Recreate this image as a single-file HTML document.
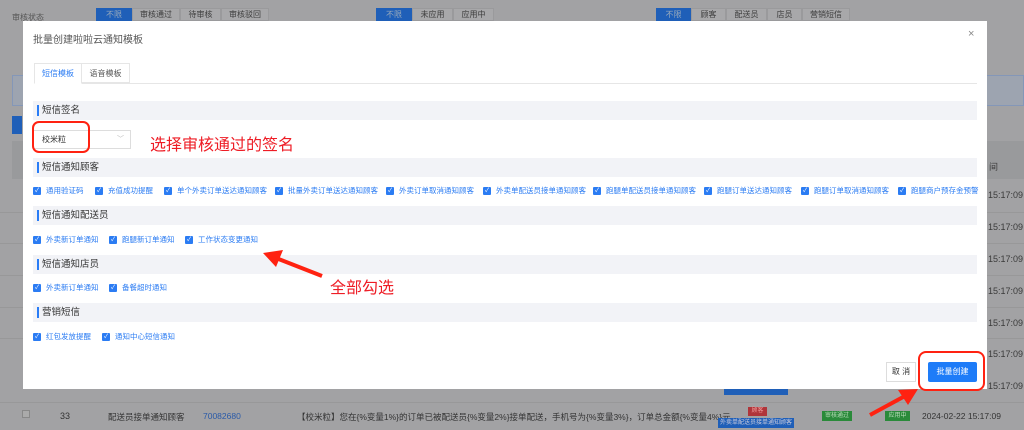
<!DOCTYPE html>
<html><head><meta charset="utf-8"><style>
*{margin:0;padding:0;box-sizing:border-box}
body{width:1024px;height:430px;overflow:hidden;background:#a2a2a4;font-family:"Liberation Sans","Noto Sans CJK SC",sans-serif;position:relative;font-size:9px;color:#333}
.a{position:absolute}
.bgb{position:absolute;height:13px;top:8px;border:1px solid #9a9a9c;background:#a8a8aa;color:#3c3c3c;font-size:8px;text-align:center;line-height:11px}
.bgb.on{background:#1f5fb8;color:#9ab;border-color:#1f5fb8}
.time{position:absolute;left:988px;font-size:9px;color:#3a3a3a}
.hl{position:absolute;left:0;width:1024px;height:1px;background:#989899}
.modal{position:absolute;left:23px;top:21px;width:964px;height:368px;background:#fff}
.sec{position:absolute;left:10px;width:944px;height:19px;background:#f2f3f7;font-size:9.5px;color:#333;line-height:19px;padding-left:9px}
.sec:before{content:"";position:absolute;left:4px;top:4px;width:2px;height:11px;background:#2a7df6}
.cb{position:absolute;font-size:7.5px;color:#2b7cf3;white-space:nowrap;line-height:10px;display:flex;align-items:center}
.cb:before{content:"✓";display:block;width:8px;height:8px;background:#2b7cf3;color:#fff;font-size:6px;line-height:8px;text-align:center;border-radius:1px;margin-right:5px}
</style></head><body>
<div class="a" style="left:12px;top:12px;font-size:8px;color:#555">审核状态</div>
<div class="bgb on" style="left:96px;width:36px">不限</div>
<div class="bgb" style="left:132px;width:48px">审核通过</div>
<div class="bgb" style="left:180px;width:41px">待审核</div>
<div class="bgb" style="left:221px;width:48px">审核驳回</div>
<div class="bgb on" style="left:376px;width:36px">不限</div>
<div class="bgb" style="left:412px;width:41px">未应用</div>
<div class="bgb" style="left:453px;width:41px">应用中</div>
<div class="bgb on" style="left:656px;width:35px">不限</div>
<div class="bgb" style="left:691px;width:35px">顾客</div>
<div class="bgb" style="left:726px;width:41px">配送员</div>
<div class="bgb" style="left:767px;width:35px">店员</div>
<div class="bgb" style="left:802px;width:48px">营销短信</div>
<div class="a" style="left:12px;top:75px;width:1012px;height:31px;background:#9da4b0;border:1px solid #8497b8"></div>
<div class="a" style="left:12px;top:116px;width:10px;height:18px;background:#1f5fb8"></div>
<div class="a" style="left:12px;top:141px;width:1012px;height:38px;background:#999a9c"></div>
<div class="hl" style="top:212px"></div><div class="hl" style="top:243px"></div><div class="hl" style="top:275px"></div><div class="hl" style="top:307px"></div><div class="hl" style="top:338px"></div><div class="hl" style="top:402px"></div>
<div class="time" style="top:190px">15:17:09</div>
<div class="time" style="top:222px">15:17:09</div>
<div class="time" style="top:254px">15:17:09</div>
<div class="time" style="top:286px">15:17:09</div>
<div class="time" style="top:318px">15:17:09</div>
<div class="time" style="top:349px">15:17:09</div>
<div class="time" style="top:381px">15:17:09</div>
<div class="a" style="top:160px;left:989px;font-size:9px;color:#3a3a3a">间</div>
<div class="a" style="left:22px;top:410px;width:8px;height:8px;border:1px solid #888;background:#aaa"></div>
<div class="a" style="left:60px;top:411px;font-size:9px;color:#333">33</div>
<div class="a" style="left:108px;top:411px;font-size:8.5px;color:#333">配送员接单通知顾客</div>
<div class="a" style="left:203px;top:411px;font-size:8.5px;color:#2a5aa8">70082680</div>
<div class="a" style="left:297px;top:411px;font-size:8.5px;color:#333;white-space:nowrap">【校米粒】您在{%变量1%}的订单已被配送员{%变量2%}接单配送，手机号为{%变量3%}，订单总金额{%变量4%}元</div>
<div class="a" style="left:748px;top:407px;width:19px;height:9px;background:#b0353a;color:#e99;font-size:6px;text-align:center;line-height:9px">顾客</div>
<div class="a" style="left:718px;top:418px;width:76px;height:10px;background:#1f5fb8;color:#ccd;font-size:6px;text-align:center;line-height:10px">外卖单配送员接单通知顾客</div>
<div class="a" style="left:724px;top:389px;width:64px;height:6px;background:#1f5fb8"></div>
<div class="a" style="left:822px;top:411px;width:30px;height:10px;background:#2a8a3a;color:#bdb;font-size:6px;text-align:center;line-height:10px">审核通过</div>
<div class="a" style="left:885px;top:411px;width:25px;height:10px;background:#2a8a3a;color:#bdb;font-size:6px;text-align:center;line-height:10px">应用中</div>
<div class="a" style="left:922px;top:411px;font-size:8.5px;color:#333">2024-02-22 15:17:09</div>

<div class="modal">
<div class="a" style="left:10px;top:10px;font-size:10px;color:#555">批量创建啦啦云通知模板</div>
<div class="a" style="left:945px;top:7px;font-size:11px;color:#888">×</div>
<div class="a" style="left:11px;top:42px;width:48px;height:21px;border:1px solid #e6e6e6;border-bottom:1px solid #fff;font-size:8px;color:#2b7cf3;text-align:center;line-height:19px;background:#fff;z-index:2">短信模板</div>
<div class="a" style="left:58px;top:42px;width:49px;height:20px;border:1px solid #e6e6e6;font-size:8px;color:#555;text-align:center;line-height:19px">语音模板</div>
<div class="a" style="left:11px;top:62px;width:943px;height:1px;background:#e6e6e6"></div>
<div class="sec" style="top:80px">短信签名</div>
<div class="a" style="left:10px;top:109px;width:98px;height:19px;border:1px solid #ddd;font-size:8px;color:#333;line-height:17px;padding-left:8px">校米粒<span style="position:absolute;right:6px;color:#bbb;font-size:7px">﹀</span></div>
<div class="a" style="left:9px;top:100px;width:58px;height:32px;border:2px solid #f21;border-radius:7px"></div>
<div class="a" style="left:127px;top:110px;font-size:16px;color:#ee1c25">选择审核通过的签名</div>
<div class="sec" style="top:137px">短信通知顾客</div>
<div class="cb" style="left:10px;top:165px">通用验证码</div>
<div class="cb" style="left:72px;top:165px">充值成功提醒</div>
<div class="cb" style="left:141px;top:165px">单个外卖订单送达通知顾客</div>
<div class="cb" style="left:252px;top:165px">批量外卖订单送达通知顾客</div>
<div class="cb" style="left:363px;top:165px">外卖订单取消通知顾客</div>
<div class="cb" style="left:460px;top:165px">外卖单配送员接单通知顾客</div>
<div class="cb" style="left:570px;top:165px">跑腿单配送员接单通知顾客</div>
<div class="cb" style="left:681px;top:165px">跑腿订单送达通知顾客</div>
<div class="cb" style="left:778px;top:165px">跑腿订单取消通知顾客</div>
<div class="cb" style="left:875px;top:165px">跑腿商户预存金预警</div>
<div class="sec" style="top:185px">短信通知配送员</div>
<div class="cb" style="left:10px;top:214px">外卖新订单通知</div>
<div class="cb" style="left:86px;top:214px">跑腿新订单通知</div>
<div class="cb" style="left:162px;top:214px">工作状态变更通知</div>
<div class="sec" style="top:234px">短信通知店员</div>
<div class="cb" style="left:10px;top:262px">外卖新订单通知</div>
<div class="cb" style="left:86px;top:262px">备餐超时通知</div>
<div class="sec" style="top:282px">营销短信</div>
<div class="cb" style="left:10px;top:311px">红包发放提醒</div>
<div class="cb" style="left:79px;top:311px">通知中心短信通知</div>
<div class="a" style="left:307px;top:253px;font-size:16px;color:#ee1c25">全部勾选</div>
<div class="a" style="left:863px;top:341px;width:30px;height:20px;border:1px solid #ddd;font-size:8px;color:#333;text-align:center;line-height:18px">取 消</div>
<div class="a" style="left:905px;top:341px;width:49px;height:20px;background:#1e7cf8;border-radius:2px;font-size:8px;color:#fff;text-align:center;line-height:20px">批量创建</div>
</div>
<div class="a" style="left:918px;top:351px;width:67px;height:40px;border:2.5px solid #f21;border-radius:8px"></div>
<svg class="a" style="left:0;top:0" width="1024" height="430">
<line x1="322" y1="276" x2="276" y2="258" stroke="#f21" stroke-width="4"/>
<polygon points="263,253 283,250 276,267" fill="#f21"/>
<line x1="870" y1="415" x2="905" y2="396" stroke="#f21" stroke-width="4"/>
<polygon points="918,389 898,390 908,405" fill="#f21"/>
</svg>
</body></html>
